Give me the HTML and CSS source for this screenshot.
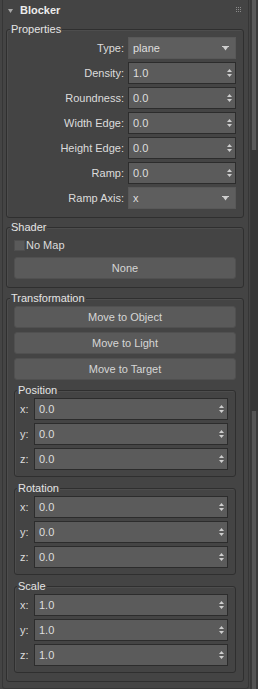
FILE: index.html
```html
<!DOCTYPE html>
<html>
<head>
  <meta charset="UTF-8">
  <title>Blocker</title>
  <link rel="stylesheet" href="styles.css">
</head>
<body>
  <div class="panel">
    <div class="rollout">
      <div class="rollout-head">
        <svg class="caret" width="5" height="4" viewBox="0 0 5 4"><polygon points="0,0 5,0 2.5,4" fill="#a8a8a8"/></svg>
        <span class="rollout-title">Blocker</span>
        <svg class="grip" width="5" height="5" viewBox="0 0 5 5" fill="#8a8a8a">
          <rect x="0" y="0" width="1" height="1"/><rect x="2" y="0" width="1" height="1"/><rect x="4" y="0" width="1" height="1"/>
          <rect x="0" y="2" width="1" height="1"/><rect x="2" y="2" width="1" height="1"/><rect x="4" y="2" width="1" height="1"/>
          <rect x="0" y="4" width="1" height="1"/><rect x="2" y="4" width="1" height="1"/><rect x="4" y="4" width="1" height="1"/>
        </svg>
      </div>

      <!-- Properties -->
      <div class="group props">
        <div class="group-title">Properties</div>
        <div class="rows">
          <div class="row"><span class="label">Type:</span><div class="select">plane<svg class="drop" width="7" height="5" viewBox="0 0 7 5"><rect x="0" y="0" width="7" height="1"/><polygon points="1,1 6,1 3.5,4.5"/></svg></div></div>
          <div class="row"><span class="label">Density:</span><div class="spinner">1.0<svg class="spin" width="5" height="8" viewBox="0 0 5 8"><polygon points="0,3 5,3 2.5,0"/><polygon points="0,5 5,5 2.5,8"/></svg></div></div>
          <div class="row"><span class="label">Roundness:</span><div class="spinner">0.0<svg class="spin" width="5" height="8" viewBox="0 0 5 8"><polygon points="0,3 5,3 2.5,0"/><polygon points="0,5 5,5 2.5,8"/></svg></div></div>
          <div class="row"><span class="label">Width Edge:</span><div class="spinner">0.0<svg class="spin" width="5" height="8" viewBox="0 0 5 8"><polygon points="0,3 5,3 2.5,0"/><polygon points="0,5 5,5 2.5,8"/></svg></div></div>
          <div class="row"><span class="label">Height Edge:</span><div class="spinner">0.0<svg class="spin" width="5" height="8" viewBox="0 0 5 8"><polygon points="0,3 5,3 2.5,0"/><polygon points="0,5 5,5 2.5,8"/></svg></div></div>
          <div class="row"><span class="label">Ramp:</span><div class="spinner">0.0<svg class="spin" width="5" height="8" viewBox="0 0 5 8"><polygon points="0,3 5,3 2.5,0"/><polygon points="0,5 5,5 2.5,8"/></svg></div></div>
          <div class="row"><span class="label">Ramp Axis:</span><div class="select">x<svg class="drop" width="7" height="5" viewBox="0 0 7 5"><rect x="0" y="0" width="7" height="1"/><polygon points="1,1 6,1 3.5,4.5"/></svg></div></div>
        </div>
      </div>

      <!-- Shader -->
      <div class="group shader">
        <div class="group-title">Shader</div>
        <div class="check-row"><span class="checkbox"></span>No Map</div>
        <button class="btn">None</button>
      </div>

      <!-- Transformation -->
      <div class="group transform">
        <div class="group-title">Transformation</div>
        <div class="buttons">
          <button class="btn">Move to Object</button>
          <button class="btn">Move to Light</button>
          <button class="btn">Move to Target</button>
        </div>

        <div class="group sub">
          <div class="group-title">Position</div>
          <div class="rows">
            <div class="row"><span class="axis">x:</span><div class="spinner">0.0<svg class="spin" width="5" height="8" viewBox="0 0 5 8"><polygon points="0,3 5,3 2.5,0"/><polygon points="0,5 5,5 2.5,8"/></svg></div></div>
            <div class="row"><span class="axis">y:</span><div class="spinner">0.0<svg class="spin" width="5" height="8" viewBox="0 0 5 8"><polygon points="0,3 5,3 2.5,0"/><polygon points="0,5 5,5 2.5,8"/></svg></div></div>
            <div class="row"><span class="axis">z:</span><div class="spinner">0.0<svg class="spin" width="5" height="8" viewBox="0 0 5 8"><polygon points="0,3 5,3 2.5,0"/><polygon points="0,5 5,5 2.5,8"/></svg></div></div>
          </div>
        </div>

        <div class="group sub">
          <div class="group-title">Rotation</div>
          <div class="rows">
            <div class="row"><span class="axis">x:</span><div class="spinner">0.0<svg class="spin" width="5" height="8" viewBox="0 0 5 8"><polygon points="0,3 5,3 2.5,0"/><polygon points="0,5 5,5 2.5,8"/></svg></div></div>
            <div class="row"><span class="axis">y:</span><div class="spinner">0.0<svg class="spin" width="5" height="8" viewBox="0 0 5 8"><polygon points="0,3 5,3 2.5,0"/><polygon points="0,5 5,5 2.5,8"/></svg></div></div>
            <div class="row"><span class="axis">z:</span><div class="spinner">0.0<svg class="spin" width="5" height="8" viewBox="0 0 5 8"><polygon points="0,3 5,3 2.5,0"/><polygon points="0,5 5,5 2.5,8"/></svg></div></div>
          </div>
        </div>

        <div class="group sub">
          <div class="group-title">Scale</div>
          <div class="rows">
            <div class="row"><span class="axis">x:</span><div class="spinner">1.0<svg class="spin" width="5" height="8" viewBox="0 0 5 8"><polygon points="0,3 5,3 2.5,0"/><polygon points="0,5 5,5 2.5,8"/></svg></div></div>
            <div class="row"><span class="axis">y:</span><div class="spinner">1.0<svg class="spin" width="5" height="8" viewBox="0 0 5 8"><polygon points="0,3 5,3 2.5,0"/><polygon points="0,5 5,5 2.5,8"/></svg></div></div>
            <div class="row"><span class="axis">z:</span><div class="spinner">1.0<svg class="spin" width="5" height="8" viewBox="0 0 5 8"><polygon points="0,3 5,3 2.5,0"/><polygon points="0,5 5,5 2.5,8"/></svg></div></div>
          </div>
        </div>
      </div>
    </div>

    <div class="scrollbar">
      <div class="track-top"></div>
      <div class="track-mid"></div>
      <div class="track-bottom"></div>
    </div>
  </div>
</body>
</html>
```

FILE: styles.css
```css
body {
  margin: 0;
  background: #444444;
  font-family: "Liberation Sans", Arial, sans-serif;
  font-size: 11px;
  color: #dcdcdc;
}
.panel {
  display: flex;
  height: 689px;
  overflow: hidden;
}
.rollout {
  box-sizing: border-box;
  width: 248px;
  height: 689px;
  margin-left: 2px;
  border: 1px solid #363636;
  border-top: none;
  border-radius: 0 0 3px 3px;
  background: #444444;
}
.rollout-head {
  display: flex;
  align-items: center;
  height: 21px;
  padding-left: 5px;
}
.caret { margin-right: 7px; }
.rollout-title {
  font-weight: bold;
  color: #ececec;
  line-height: 21px;
}
.grip { margin-left: auto; margin-right: 7px; margin-top: -2px; }

.group {
  border: 1px solid #2f2f2f;
  border-radius: 3px;
  margin: 10px 4px 0 3px;
  padding: 0 7px 8px 7px;
  box-shadow: inset 1px 1px 0 #4d4d4d;
}
.group-title {
  width: fit-content;
  margin: -8px 0 1px -4px;
  padding: 0 1px;
  background: #444444;
  line-height: 14px;
  color: #e4e4e4;
}
.props { margin-top: 8px; }
.rows {
  display: flex;
  flex-direction: column;
  gap: 3px;
}
.row {
  display: flex;
  align-items: center;
  height: 22px;
}
.label {
  width: 110px;
  margin-right: 4px;
  text-align: right;
}
.select, .spinner {
  flex: 1;
  box-sizing: border-box;
  height: 22px;
  display: flex;
  align-items: center;
  padding-left: 4px;
  color: #dedede;
}
.select {
  background: #5e5e5e;
  border: 1px solid #585858;
  padding-right: 6px;
}
.spinner {
  background: #5b5b5b;
  border: 1px solid #2c2c2c;
  padding-right: 3px;
}
.drop, .spin { margin-left: auto; fill: #cfcfcf; }

.shader { margin-top: 9px; }
.check-row {
  display: flex;
  align-items: center;
  height: 16px;
  margin: 3px 0 4px 0;
}
.checkbox {
  box-sizing: border-box;
  width: 11px;
  height: 11px;
  margin-right: 1px;
  background: #5a5a5a;
  border: 1px solid #4e4e4e;
}
.btn {
  display: block;
  box-sizing: border-box;
  width: 100%;
  height: 22px;
  padding: 0;
  font-family: inherit;
  font-size: 11px;
  color: #d6d6d6;
  background: #5a5a5a;
  border: 1px solid #505050;
  border-radius: 3px;
}
.buttons {
  display: flex;
  flex-direction: column;
  gap: 4px;
  margin-top: 1px;
}
.sub {
  margin: 11px 0 0 0;
  padding: 0 7px 6px 5px;
}
.transform .buttons + .sub { margin-top: 10px; }
.sub .group-title { margin-left: -3px; }
.axis {
  width: 14px;
}

.scrollbar {
  display: flex;
  flex-direction: column;
  width: 7px;
  margin-left: 1px;
  background: #3a3a3a;
  border-left: 1px solid #383838;
}
.track-top {
  height: 150px;
  margin: 0 2px 0 1px;
  background: #595959;
}
.track-mid {
  height: 261px;
  background: #363636;
}
.track-bottom {
  flex: 1;
  margin: 0 2px 0 1px;
  background: #555555;
}
```
